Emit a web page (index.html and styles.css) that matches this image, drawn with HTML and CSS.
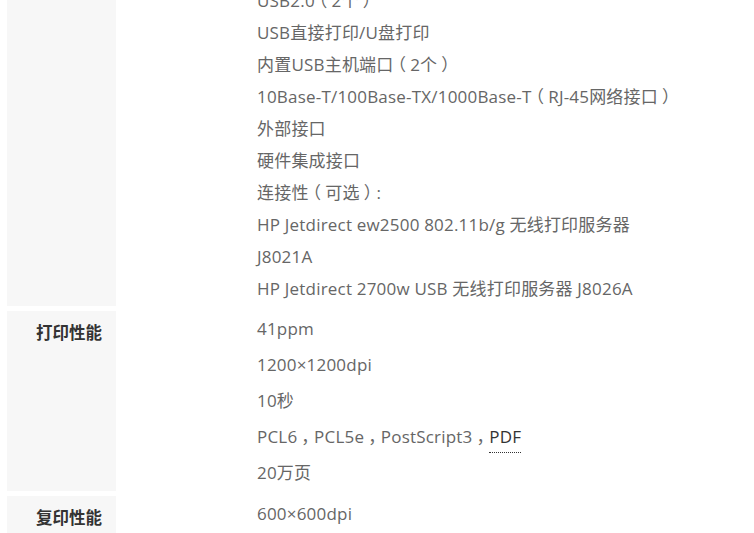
FILE: index.html
```html
<!DOCTYPE html>
<html lang="zh-CN">
<head>
  <meta charset="UTF-8">
  <title>规格参数</title>
  <link rel="stylesheet" href="styles.css">
</head>
<body>
  <div class="spec-table">
    <div class="spec-row spec-row-first">
      <div class="spec-label"></div>
      <div class="spec-values tight">
        <p>USB2.0<span class="fw">（</span>2个<span class="fw">）</span></p>
        <p>USB直接打印/U盘打印</p>
        <p>内置USB主机端口<span class="fw">（</span>2个<span class="fw">）</span></p>
        <p>10Base-T/100Base-TX/1000Base-T<span class="fw">（</span>RJ-45网络接口<span class="fw">）</span></p>
        <p>外部接口</p>
        <p>硬件集成接口</p>
        <p>连接性<span class="fw">（</span>可选<span class="fw">）</span>:</p>
        <p>HP Jetdirect ew2500 802.11b/g 无线打印服务器</p>
        <p>J8021A</p>
        <p>HP Jetdirect 2700w USB 无线打印服务器 J8026A</p>
      </div>
    </div>
    <div class="spec-row">
      <div class="spec-label">打印性能</div>
      <div class="spec-values">
        <p>41ppm</p>
        <p>1200×1200dpi</p>
        <p>10秒</p>
        <p>PCL6<span class="fw">，</span>PCL5e<span class="fw">，</span>PostScript3<span class="fw">，</span><abbr class="term">PDF</abbr></p>
        <p>20万页</p>
      </div>
    </div>
    <div class="spec-row">
      <div class="spec-label">复印性能</div>
      <div class="spec-values">
        <p>600×600dpi</p>
      </div>
    </div>
  </div>
</body>
</html>
```

FILE: styles.css
```css
body {
  margin: 0;
  background: #fff;
  font-family: "Open Sans", "Noto Sans CJK SC", sans-serif;
  font-size: 17px;
  color: #666;
  overflow: hidden;
}

.spec-table {
  display: flex;
  flex-direction: column;
  gap: 5px;
  padding-left: 7px;
}

.spec-row {
  display: grid;
  grid-template-columns: 109px 1fr;
  column-gap: 141px;
}

.spec-row-first {
  margin-top: -15px;
}

.spec-label {
  background: #f7f7f7;
  padding: 4px 0 0 29px;
  line-height: 36px;
  font-size: 16.5px;
  font-weight: bold;
  color: #333;
}

.spec-values p {
  margin: 0;
  line-height: 36px;
  letter-spacing: 0.2px;
  white-space: nowrap;
}

.spec-values.tight {
  padding-bottom: 1px;
}

.spec-values.tight p {
  line-height: 32px;
}

/* full-width punctuation sits centred in the source font */
.fw {
  font-feature-settings: "halt";
  padding: 0 4px;
}

.term {
  text-decoration: none;
  color: #333;
  border-bottom: 1px dotted #333;
  padding-bottom: 4px;
}
```
